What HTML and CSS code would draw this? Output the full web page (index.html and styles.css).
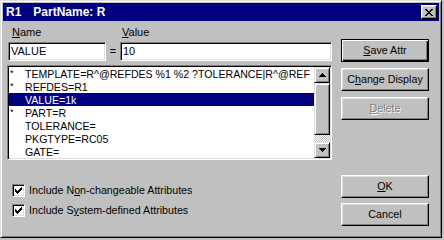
FILE: index.html
```html
<!DOCTYPE html>
<html>
<head>
<meta charset="utf-8">
<link rel="stylesheet" href="styles.css">
</head>
<body>
<div class="window">
  <div class="titlebar">
    <span class="t-ref">R1</span><span class="t-name">PartName: R</span>
    <span class="close"><svg width="8" height="7" viewBox="0 0 8 7" shape-rendering="crispEdges"><path fill="#000" d="M0 0h2v1h-2zM6 0h2v1h-2zM1 1h2v1h-2zM5 1h2v1h-2zM2 2h4v1h-4zM3 3h2v1h-2zM2 4h4v1h-4zM1 5h2v1h-2zM5 5h2v1h-2zM0 6h2v1h-2zM6 6h2v1h-2z"/></svg></span>
  </div>
  <div class="body">
    <div class="main">
      <div class="labels"><span class="lbl-name"><u>N</u>ame</span><span class="lbl-value"><u>V</u>alue</span></div>
      <div class="fields">
        <div class="field f-name">VALUE</div>
        <span class="eq">=</span>
        <div class="field f-value">10</div>
      </div>
      <div class="list">
        <div class="rows">
          <div class="row"><span class="star">*</span>TEMPLATE=R^@REFDES %1 %2 ?TOLERANCE|R^@REF</div>
          <div class="row"><span class="star">*</span>REFDES=R1</div>
          <div class="row selected"><span class="star"></span>VALUE=1k</div>
          <div class="row"><span class="star">*</span>PART=R</div>
          <div class="row"><span class="star"></span>TOLERANCE=</div>
          <div class="row"><span class="star"></span>PKGTYPE=RC05</div>
          <div class="row"><span class="star"></span>GATE=</div>
        </div>
        <div class="scrollbar">
          <div class="sb-btn"><svg width="7" height="4" viewBox="0 0 7 4" shape-rendering="crispEdges"><path fill="#000" d="M3 0h1v1h-1zM2 1h3v1h-3zM1 2h5v1h-5zM0 3h7v1h-7z"/></svg></div>
          <div class="sb-track"><div class="sb-thumb"></div></div>
          <div class="sb-btn"><svg width="7" height="4" viewBox="0 0 7 4" shape-rendering="crispEdges"><path fill="#000" d="M0 0h7v1h-7zM1 1h5v1h-5zM2 2h3v1h-3zM3 3h1v1h-1z"/></svg></div>
        </div>
      </div>
      <div class="checks">
        <div class="check"><span class="box"><svg width="9" height="9" viewBox="0 0 9 9" shape-rendering="crispEdges"><path fill="#000" d="M7 1h1v1h-1zM6 2h2v1h-2zM1 3h1v1h-1zM5 3h3v1h-3zM1 4h2v1h-2zM4 4h3v1h-3zM1 5h5v1h-5zM2 6h3v1h-3zM3 7h1v1h-1z"/></svg></span><span class="check-label">Include N<u>o</u>n-changeable Attributes</span></div>
        <div class="check"><span class="box"><svg width="9" height="9" viewBox="0 0 9 9" shape-rendering="crispEdges"><path fill="#000" d="M7 1h1v1h-1zM6 2h2v1h-2zM1 3h1v1h-1zM5 3h3v1h-3zM1 4h2v1h-2zM4 4h3v1h-3zM1 5h5v1h-5zM2 6h3v1h-3zM3 7h1v1h-1z"/></svg></span><span class="check-label">Include S<u>y</u>stem-defined Attributes</span></div>
      </div>
    </div>
    <div class="buttons">
      <div class="btn default"><u>S</u>ave Attr</div>
      <div class="btn">C<u>h</u>ange Display</div>
      <div class="btn disabled"><u>D</u>elete</div>
      <div class="btn ok"><u>O</u>K</div>
      <div class="btn">Cancel</div>
    </div>
  </div>
</div>
</body>
</html>
```

FILE: styles.css
```css
html, body {
  margin: 0;
  padding: 0;
  background: #c0c0c0;
}

.window {
  width: 442px;
  height: 238px;
  box-sizing: border-box;
  background: #c0c0c0;
  border: 1px solid;
  border-color: #dfdfdf #000 #000 #dfdfdf;
  box-shadow: inset 1px 1px #fff, inset -1px -1px #808080;
  padding: 2px;
  font: 10.7px "Liberation Sans", Arial, sans-serif;
  color: #000;
  display: flex;
  flex-direction: column;
}

.titlebar {
  height: 18px;
  background: #000080;
  color: #fff;
  display: flex;
  align-items: center;
  padding: 0 2px 0 3px;
  font-weight: bold;
  font-size: 12px;
  line-height: 18px;
}

.t-name {
  margin-left: 12px;
}

.close {
  margin-left: auto;
  width: 16px;
  height: 14px;
  box-sizing: border-box;
  background: #c0c0c0;
  border: 1px solid;
  border-color: #fff #000 #000 #fff;
  box-shadow: inset -1px -1px #808080, inset 1px 1px #dfdfdf;
  display: flex;
  align-items: center;
  justify-content: center;
}

.close svg {
  display: block;
  margin-left: -1px;
}

.body {
  display: flex;
  padding: 5px 10px 0 4px;
}

.main {
  width: 325px;
  display: flex;
  flex-direction: column;
}

.labels {
  height: 13px;
  line-height: 13px;
  display: flex;
  font-size: 11px;
}

.lbl-name {
  padding-left: 5px;
  width: 110px;
}

.fields {
  display: flex;
  margin-top: 3px;
  height: 19px;
  font-size: 11px;
}

.field {
  box-sizing: border-box;
  height: 19px;
  background: #fff;
  border: 1px solid;
  border-color: #808080 #fff #fff #808080;
  box-shadow: inset 1px 1px #000, inset -1px -1px #dfdfdf;
  padding: 1px 0 0 2px;
  line-height: 15px;
  white-space: nowrap;
}

.f-name {
  margin-left: 1px;
  width: 98px;
}

.eq {
  width: 14px;
  text-align: center;
  line-height: 19px;
}

.f-value {
  flex: 1;
}

.list {
  margin-top: 4px;
  height: 95px;
  box-sizing: border-box;
  background: #fff;
  border: 1px solid;
  border-color: #808080 #fff #fff #808080;
  box-shadow: inset 1px 1px #000, inset -1px -1px #dfdfdf;
  padding: 1px;
  display: flex;
}

.rows {
  flex: 1;
  min-width: 0;
  overflow: hidden;
  font-size: 10.6px;
}

.row {
  height: 11px;
  padding-top: 2px;
  line-height: 11px;
  white-space: nowrap;
  overflow: hidden;
}

.row.selected {
  background: #000080;
  color: #fff;
}

.star {
  display: inline-block;
  width: 16px;
  padding-left: 1px;
  box-sizing: border-box;
  font-size: 9px;
  vertical-align: top;
  line-height: 9px;
}

.scrollbar {
  width: 16px;
  display: flex;
  flex-direction: column;
}

.sb-btn {
  height: 16px;
  box-sizing: border-box;
  background: #c0c0c0;
  border: 1px solid;
  border-color: #dfdfdf #000 #000 #dfdfdf;
  box-shadow: inset 1px 1px #fff, inset -1px -1px #808080;
  display: flex;
  align-items: center;
  justify-content: center;
}

.sb-track {
  flex: 1;
  background: repeating-conic-gradient(#c0c0c0 0 25%, #fff 0 50%) 0 0 / 2px 2px;
}

.sb-thumb {
  height: 52px;
  box-sizing: border-box;
  background: #c0c0c0;
  border: 1px solid;
  border-color: #dfdfdf #000 #000 #dfdfdf;
  box-shadow: inset 1px 1px #fff, inset -1px -1px #808080;
}

.checks {
  margin-top: 24px;
  display: flex;
  flex-direction: column;
  gap: 7px;
}

.check {
  height: 13px;
  display: flex;
  align-items: center;
  padding-left: 5px;
  line-height: 13px;
}

.box {
  width: 13px;
  height: 13px;
  box-sizing: border-box;
  background: #fff;
  border: 1px solid;
  border-color: #808080 #fff #fff #808080;
  box-shadow: inset 1px 1px #000, inset -1px -1px #dfdfdf;
  padding: 1px;
}

.box svg {
  display: block;
}

.check-label {
  margin-left: 4px;
  white-space: nowrap;
}

.buttons {
  margin-left: 9px;
  margin-top: 13px;
  width: 88px;
  display: flex;
  flex-direction: column;
}

.btn {
  height: 23px;
  box-sizing: border-box;
  border: 1px solid;
  border-color: #fff #000 #000 #fff;
  box-shadow: inset -1px -1px #808080, inset 1px 1px #dfdfdf;
  text-align: center;
  line-height: 21px;
  white-space: nowrap;
  margin-bottom: 6px;
}

.btn.default {
  border-color: #000;
  box-shadow: inset 1px 1px #fff, inset -1px -1px #000, inset -2px -2px #808080;
}

.btn.disabled {
  color: #808080;
  text-shadow: 1px 1px #fff;
}

.btn.ok {
  margin-top: 49px;
  margin-bottom: 5px;
}
```
